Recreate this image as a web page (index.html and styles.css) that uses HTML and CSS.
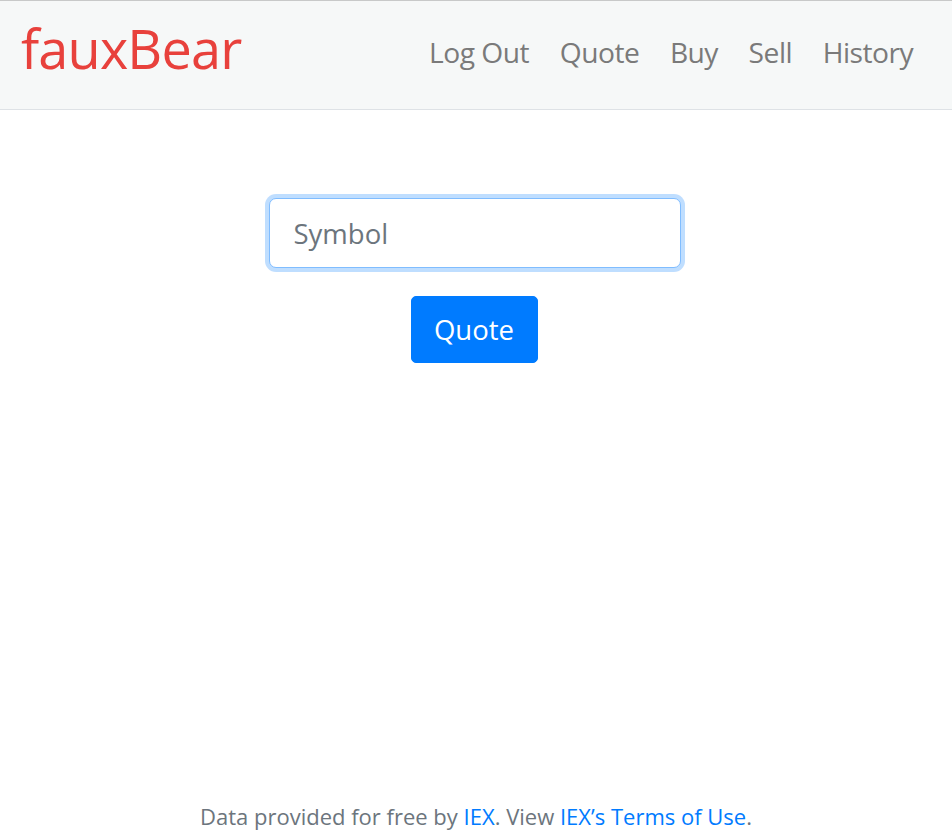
FILE: index.html
```html
<!DOCTYPE html>
<html lang="en">
<head>
<meta charset="utf-8">
<title>fauxBear: Quote</title>
<link rel="stylesheet" href="styles.css">
</head>
<body>
<nav class="navbar">
  <a class="brand" href="#">fauxBear</a>
  <ul class="nav">
    <li><a class="nav-link" href="#">Log Out</a></li>
    <li><a class="nav-link" href="#">Quote</a></li>
    <li><a class="nav-link" href="#">Buy</a></li>
    <li><a class="nav-link" href="#">Sell</a></li>
    <li><a class="nav-link" href="#">History</a></li>
  </ul>
</nav>
<main class="main">
  <form class="quote-form">
    <div class="field-wrap">
      <input class="field" type="text" placeholder="Symbol" autofocus>
    </div>
    <button class="btn" type="button">Quote</button>
  </form>
</main>
<footer class="footer">
  Data provided for free by <a href="#">IEX</a>. View <a href="#">IEX’s Terms of Use</a>.
</footer>
</body>
</html>
```
FILE: styles.css
```css
html, body {
  margin: 0;
  height: 100%;
}
body {
  font-family: "Open Sans", "Noto Sans", sans-serif;
  color: #212529;
  background: #fff;
  display: flex;
  flex-direction: column;
}
.navbar {
  display: flex;
  align-items: center;
  justify-content: space-between;
  height: 108px;
  background: #f6f8f8;
  border-top: 1px solid #c8c9c9;
  border-bottom: 1px solid #dee2e6;
  padding: 0 23.5px 0 21px;
}
.brand {
  font-size: 54px;
  color: #e8413c;
  text-decoration: none;
  letter-spacing: -0.8px;
  line-height: 1;
  margin-top: -14px;
}
.nav {
  display: flex;
  list-style: none;
  margin: 0;
  padding: 0;
  margin-top: -6px;
}
.nav-link {
  display: block;
  font-size: 28.2px;
  color: #7a7a7a;
  text-decoration: none;
  padding: 0 15.3px;
  letter-spacing: -0.5px;
}
.main {
  flex: 1;
  display: flex;
  justify-content: center;
}
.quote-form {
  display: flex;
  flex-direction: column;
  align-items: center;
  padding-top: 88px;
}
.field {
  box-sizing: border-box;
  width: 412px;
  height: 70px;
  font-family: inherit;
  font-size: 27.5px;
  color: #495057;
  padding: 0 22px 0 24px;
  border: 1px solid #80bdff;
  border-radius: 7px;
  box-shadow: 0 0 0 4px rgba(0, 123, 255, .25);
  outline: none;
  background: #fff;
  margin-left: -3px;
}
.field::placeholder {
  color: #6c757d;
}
.btn {
  margin-top: 28px;
  width: 127px;
  height: 67px;
  font-family: inherit;
  font-size: 27.5px;
  color: #fff;
  background: #007bff;
  border: 1px solid #007bff;
  border-radius: 5px;
  padding: 0;
  margin-left: -4px;
}
.footer {
  text-align: center;
  font-size: 22px;
  color: #6c757d;
  padding: 0 0 6px;
  line-height: 32px;
}
.footer a {
  color: #007bff;
  text-decoration: none;
}
```
